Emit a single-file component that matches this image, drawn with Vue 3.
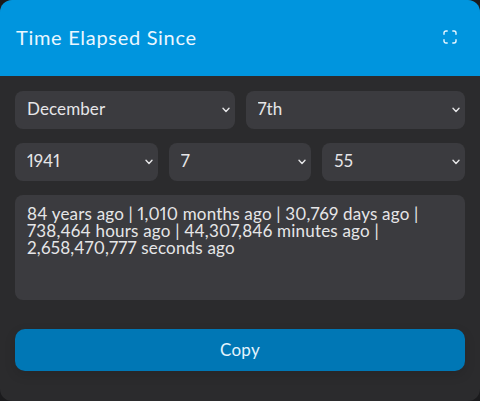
<script setup>
const rowOne = ['December', '7th']
const rowTwo = ['1941', '7', '55']
const result = '84 years ago | 1,010 months ago | 30,769 days ago | 738,464 hours ago | 44,307,846 minutes ago | 2,658,470,777 seconds ago'
</script>

<template>
  <div class="panel">
    <header class="head">
      <h1 class="title">Time Elapsed Since</h1>
      <svg class="expand" viewBox="0 0 14 14" width="14" height="14" fill="none" stroke="currentColor" stroke-width="1.4" stroke-linecap="round">
        <path d="M1 4.200V3a2 2 0 0 1 2-2h1.200M9.800 1H11a2 2 0 0 1 2 2v1.200M13 9.800V11a2 2 0 0 1-2 2H9.800M4.200 13H3a2 2 0 0 1-2-2V9.800" />
      </svg>
    </header>
    <main class="body">
      <div class="row">
        <label v-for="item in rowOne" :key="item" class="field">
          <select class="select"><option>{{ item }}</option></select>
          <svg class="chev" viewBox="0 0 8 6" width="8" height="6" fill="none" stroke="currentColor" stroke-width="1.4" stroke-linecap="round" stroke-linejoin="round"><path d="M1 1.300 4 4.500l3-3.200" /></svg>
        </label>
      </div>
      <div class="row">
        <label v-for="item in rowTwo" :key="item" class="field">
          <select class="select"><option>{{ item }}</option></select>
          <svg class="chev" viewBox="0 0 8 6" width="8" height="6" fill="none" stroke="currentColor" stroke-width="1.4" stroke-linecap="round" stroke-linejoin="round"><path d="M1 1.300 4 4.500l3-3.200" /></svg>
        </label>
      </div>
      <textarea class="output" readonly :value="result"></textarea>
      <button class="copy" type="button">Copy</button>
    </main>
  </div>
</template>

<style>
html, body { margin: 0; background: #1b1b1d; }
</style>

<style scoped>
.panel {
  width: 480px;
  height: 401px;
  box-sizing: border-box;
  background: #2b2b2d;
  border-radius: 12px;
  overflow: hidden;
  font-family: Lato, "Open Sans", sans-serif;
  font-variant-numeric: proportional-nums;
  color: #e6e6e8;
  display: flex;
  flex-direction: column;
}
.head {
  height: 76px;
  flex: none;
  background: #0095de;
  color: #eaf7ff;
  padding: 0 23px 3px 16px;
  display: flex;
  align-items: center;
  justify-content: space-between;
  box-sizing: border-box;
}
.title {
  margin: 0;
  font-size: 20px;
  font-weight: 400;
  letter-spacing: 0.7px;
}
.body {
  padding: 15px 15px 0;
  display: flex;
  flex-direction: column;
  gap: 14px;
}
.row { display: flex; gap: 11px; }
.field { position: relative; flex: 1; display: block; min-width: 0; }
.select {
  appearance: none;
  display: block;
  width: 100%;
  height: 38px;
  box-sizing: border-box;
  border: 0;
  border-radius: 8px;
  background: #3b3b3f;
  color: #e6e6e8;
  font: inherit;
  font-size: 17px;
  letter-spacing: 0.1px;
  padding: 0 12px 3px;
  outline: none;
}
.chev {
  position: absolute;
  right: 5px;
  top: 16px;
  color: #e6e6e8;
  pointer-events: none;
}
.output {
  display: block;
  width: 100%;
  height: 105px;
  box-sizing: border-box;
  border: 0;
  border-radius: 8px;
  background: #3b3b3f;
  color: #e6e6e8;
  font: inherit;
  font-size: 17px;
  line-height: 17px;
  letter-spacing: 0.2px;
  padding: 10px 12px;
  resize: none;
  outline: none;
}
.copy {
  display: block;
  height: 42px;
  margin-top: 15px;
  padding: 0 0 2px;
  border: 0;
  border-radius: 10px;
  background: #0077b5;
  color: #e4f4fd;
  font: inherit;
  font-size: 17px;
  letter-spacing: 0.3px;
  box-shadow: 0 4px 12px rgba(0, 0, 0, 0.12);
}
</style>
